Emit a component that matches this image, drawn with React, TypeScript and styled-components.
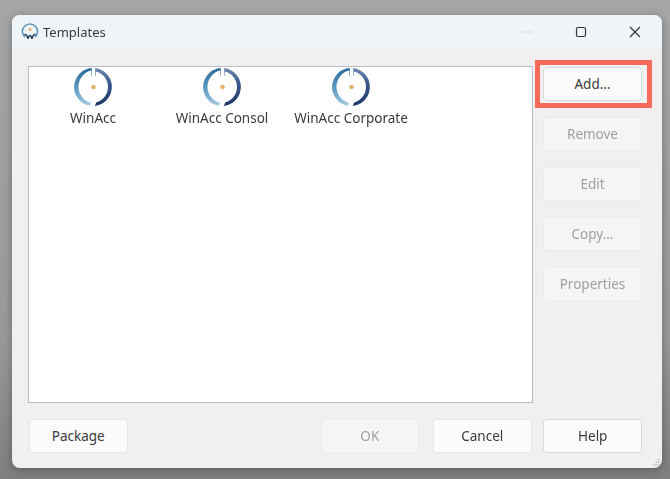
import React from "react";
import styled, { createGlobalStyle } from "styled-components";

const GlobalStyle = createGlobalStyle`
  html, body {
    margin: 0;
    padding: 0;
    height: 100%;
  }
  body {
    font-family: "Noto Sans", "Open Sans", sans-serif;
    background: #8f8f8f;
    overflow: hidden;
  }
`;

const Desktop = styled.div`
  width: 670px;
  height: 479px;
  box-sizing: border-box;
  padding: 15px 8px 11px 12px;
  background: linear-gradient(180deg, #a6a6a6 0%, #9a9a9a 70%, #7f7f7f 100%);
`;

const Window = styled.div`
  width: 650px;
  height: 453px;
  display: flex;
  flex-direction: column;
  position: relative;
  border-radius: 8px;
  overflow: hidden;
  background: #f0f0f0;
  box-shadow: 0 2px 10px rgba(0, 0, 0, 0.3);
  filter: blur(0.4px);
`;

const TitleBar = styled.div`
  height: 33px;
  flex: none;
  display: flex;
  align-items: center;
  padding-left: 9px;
  background: #eff4f9;
`;

const TitleText = styled.span`
  margin-left: 4px;
  font-size: 13px;
  color: #3a3a3a;
  flex: 1;
`;

const Controls = styled.div`
  display: flex;
  align-items: center;
`;

const ControlButton = styled.div`
  width: 54px;
  height: 33px;
  display: flex;
  align-items: center;
  justify-content: center;
`;

const Body = styled.div`
  flex: 1;
  display: flex;
  flex-direction: column;
  padding: 18px 20px 15px 16px;
`;

const Main = styled.div`
  display: flex;
  gap: 10px;
  height: 337px;
`;

const ListBox = styled.div`
  width: 505px;
  box-sizing: border-box;
  background: #fff;
  border: 1px solid #b9bcc2;
  display: flex;
  align-items: flex-start;
`;

const ListItem = styled.div`
  width: 129px;
  display: flex;
  flex-direction: column;
  align-items: center;
  gap: 2px;
  color: #3a3a3a;
  font-size: 13.5px;
  white-space: nowrap;
  position: relative;
  left: -0.5px;
`;

const SideColumn = styled.div`
  display: flex;
  flex-direction: column;
  gap: 16px;
  padding-top: 1px;
`;

const Btn = styled.div<{ $disabled?: boolean; $strong?: boolean }>`
  width: 99px;
  height: 34px;
  box-sizing: border-box;
  display: flex;
  align-items: center;
  justify-content: center;
  font-size: 13.5px;
  border-radius: 4px;
  background: ${(p) => (p.$disabled ? "#f5f5f5" : "#fbfbfb")};
  color: ${(p) => (p.$disabled ? "#a0a0a0" : "#3a3a3a")};
  border: 1px solid ${(p) => (p.$disabled ? "#ebebeb" : p.$strong ? "#d6dae0" : "#e6e6e6")};
  position: relative;
`;

const Highlight = styled.div`
  position: absolute;
  left: -9px;
  top: -8px;
  width: 117px;
  height: 48px;
  box-sizing: border-box;
  border: 5px solid #f76a5b;
  pointer-events: none;
`;

const Footer = styled.div`
  display: flex;
  margin-top: 16px;
  padding-left: 1px;
`;

const Spacer = styled.div`
  width: 194px;
`;

const FooterGap = styled.div`
  width: 14px;
`;

const FooterGapSmall = styled.div`
  width: 12px;
`;

const Grip = styled.svg`
  position: absolute;
  right: 2px;
  bottom: 2px;
`;

function AppIcon() {
  return (
    <svg width="18" height="18" viewBox="0 0 18 18">
      <path d="M4 14.2 A7.6 7.6 0 1 1 14 14.2" fill="none" stroke="#5b93bd" strokeWidth="1.5" />
      <path
        d="M3.2 11.6 Q6 10.8 7 15.8 Q9 9.4 11 15.8 Q12 10.8 14.8 11.6"
        fill="none"
        stroke="#2b4060"
        strokeWidth="1.5"
      />
      <circle cx="9" cy="6.6" r="1.5" fill="#e3ad55" />
    </svg>
  );
}

function TemplateIcon({ id }: { id: string }) {
  return (
    <svg width="40" height="40" viewBox="0 0 40 40">
      <defs>
        <linearGradient id={`${id}-l`} x1="0" y1="0" x2="0" y2="1">
          <stop offset="0" stopColor="#2a6a9c" />
          <stop offset="0.55" stopColor="#5b9cc2" />
          <stop offset="1" stopColor="#a6cbdf" />
        </linearGradient>
        <linearGradient id={`${id}-r`} x1="0" y1="0" x2="0" y2="1">
          <stop offset="0" stopColor="#6f8bb2" />
          <stop offset="0.4" stopColor="#3a5a8c" />
          <stop offset="1" stopColor="#1d3768" />
        </linearGradient>
        <radialGradient id={`${id}-d`}>
          <stop offset="0" stopColor="#dfa94f" />
          <stop offset="0.65" stopColor="#e2b672" />
          <stop offset="1" stopColor="#f3e9d8" />
        </radialGradient>
      </defs>
      <path
        d="M18.8 1 A19 19 0 0 0 17 38.7 L17.8 35.8 A16.6 16.6 0 0 1 18.2 3.6 L18.3 9 L18.8 9 Z"
        fill={`url(#${id}-l)`}
      />
      <path
        d="M22.2 1.1 A19 19 0 0 1 24 38.5 L21.8 38.9 L23.4 35.2 A15.8 15.8 0 0 0 22.8 4.6 L22.6 9 L22.1 9 Z"
        fill={`url(#${id}-r)`}
      />
      <circle cx="20.5" cy="20" r="2.6" fill={`url(#${id}-d)`} />
    </svg>
  );
}

const items = ["WinAcc", "WinAcc Consol", "WinAcc Corporate"];

export default function App() {
  return (
    <>
      <GlobalStyle />
      <Desktop>
        <Window>
          <TitleBar>
            <AppIcon />
            <TitleText>Templates</TitleText>
            <Controls>
              <ControlButton>
                <svg width="12" height="12" viewBox="0 0 12 12">
                  <path d="M1 6 H11" stroke="#d4d8dc" strokeWidth="1" />
                </svg>
              </ControlButton>
              <ControlButton>
                <svg width="12" height="12" viewBox="0 0 12 12">
                  <rect x="1.5" y="1.5" width="9" height="9" rx="1.5" fill="none" stroke="#333" strokeWidth="1.2" />
                </svg>
              </ControlButton>
              <ControlButton>
                <svg width="12" height="12" viewBox="0 0 12 12">
                  <path d="M1 1 L11 11 M11 1 L1 11" stroke="#333" strokeWidth="1.2" />
                </svg>
              </ControlButton>
            </Controls>
          </TitleBar>
          <Body>
            <Main>
              <ListBox>
                {items.map((name, i) => (
                  <ListItem key={name}>
                    <TemplateIcon id={`tpl${i}`} />
                    {name}
                  </ListItem>
                ))}
              </ListBox>
              <SideColumn>
                <Btn $strong>
                  Add...
                  <Highlight />
                </Btn>
                <Btn $disabled>Remove</Btn>
                <Btn $disabled>Edit</Btn>
                <Btn $disabled>Copy...</Btn>
                <Btn $disabled>Properties</Btn>
              </SideColumn>
            </Main>
            <Footer>
              <Btn>Package</Btn>
              <Spacer />
              <Btn $disabled>OK</Btn>
              <FooterGap />
              <Btn>Cancel</Btn>
              <FooterGapSmall />
              <Btn $strong>Help</Btn>
            </Footer>
          </Body>
          <Grip width="8" height="8" viewBox="0 0 8 8">
            <path d="M6 1h1.4v1.4H6zM3.5 3.5h1.4v1.4H3.5zM6 3.5h1.4v1.4H6zM1 6h1.4v1.4H1zM3.5 6h1.4v1.4H3.5zM6 6h1.4v1.4H6z" fill="#b8b8b8" />
          </Grip>
        </Window>
      </Desktop>
    </>
  );
}
